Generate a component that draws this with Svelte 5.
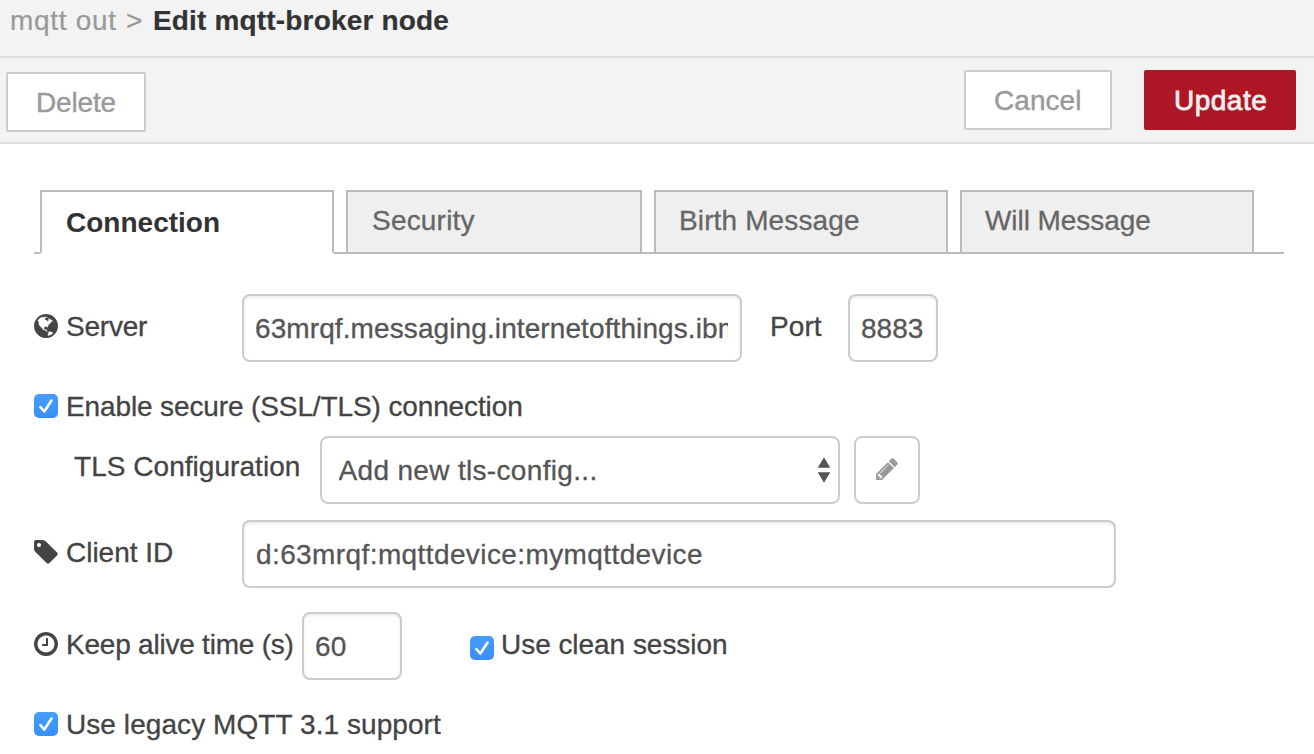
<script>
  const tabs = [
    { label: 'Connection', width: 294, gap: 12, spacing: 0.01 },
    { label: 'Security', width: 296, gap: 12, spacing: 0.2 },
    { label: 'Birth Message', width: 294, gap: 12, spacing: 0.13 },
    { label: 'Will Message', width: 294, gap: 0, spacing: -0.06 }
  ];
  let active = $state('Connection');
</script>

{#snippet check()}
  <svg class="check" viewBox="0 0 24 24" role="img" aria-label="checked">
    <defs>
      <linearGradient id="blue" x1="0" y1="0" x2="0" y2="1">
        <stop offset="0" stop-color="#489dfb" />
        <stop offset="1" stop-color="#3590fb" />
      </linearGradient>
    </defs>
    <rect width="24" height="24" rx="5" fill="url(#blue)" />
    <path d="M6.400 13.200l3.900 4.300L17.500 6.500" fill="none" stroke="#fff" stroke-width="2.600" stroke-linecap="round" stroke-linejoin="round" />
  </svg>
{/snippet}

<header class="title">
  <span class="crumb">mqtt out</span><span class="sep">&gt;</span><strong>Edit mqtt-broker node</strong>
</header>

<div class="toolbar">
  <button class="delete">Delete</button>
  <button class="cancel">Cancel</button>
  <button class="update">Update</button>
</div>

<main>
  <nav class="tabs">
    {#each tabs as tab}
      <button
        class="tab"
        class:active={active === tab.label}
        style="width: {tab.width}px; margin-right: {tab.gap}px; letter-spacing: {tab.spacing}px"
        onclick={() => (active = tab.label)}>{tab.label}</button>
    {/each}
  </nav>

  <div class="row server-row">
    <svg class="icon" viewBox="128 128 1536 1536"><path d="M896 128q209 0 385.500 103t279.500 279.500 103 385.500-103 385.500-279.500 279.500-385.500 103-385.500-103-279.500-279.500-103-385.500 103-385.500 279.500-279.500 385.500-103zm274 521q-2 1-9.500 9.500t-13.500 9.500q2 0 4.500-5t5-11 3.500-7q6-7 22-15 14-6 52-12 34-8 51 11-2-2 9.500-13t14.500-12q3-2 15-4.500t15-7.500l2-22q-12 1-17.500-7t-6.500-21q0 2-6 8 0-7-4.500-8t-11.500 1-9 1q-10-3-15-7.500t-8-16.500-4-15q-2-5-9.500-11t-9.500-10q-1-2-2.500-5.500t-3-6.500-4-5.500-5.500-2.500-7 5-7.500 10-4.500 5q-3-2-6-1.500t-4.500 1-4.500 3-5 3.500q-3 2-8.500 3t-8.500 2q15-5-1-11-10-4-16-3 9-4 7.500-12t-8.500-14h5q-1-4-8.500-8.500t-17.500-8.500-13-6q-8-5-34-9.500t-33-.5q-5 6-4.500 10.500t4 14 3.500 12.500q1 6-5.500 13t-6.500 12q0 7 14 15.500t10 21.500q-3 8-16 16t-16 12q-5 8-1.500 18.500t10.500 16.500q2 2 1.500 4t-3.500 4.500-5.500 4-6.500 3.500l-3 2q-11 5-20.500-6t-13.500-26q-7-25-16-30-23-8-29 1-5-13-41-26-25-9-58-4 6-1 0-15-7-15-19-12 3-6 4-17.500t1-13.500q3-13 12-23 1-1 7-8.500t9.500-13.500.5-6q35 4 50-11 5-5 11.500-17t10.500-17q9-6 14-5.500t14.500 5.500 14.500 5q14 1 15.500-11t-7.500-20q12 1 3-17-4-7-8-9-12-4-27 5-8 4 2 8-1-1-9.500 10.500t-16.500 17.500-16-5q-1-1-5.500-13.500t-9.500-13.500q-8 0-16 15 3-8-11-15t-24-8q19-12-8-27-7-4-20.500-5t-19.500 4q-5 7-5.500 11.500t5 8 10.500 5.500 11.500 4 8.500 3q14 10 8 14-2 1-8.500 3.500t-11.500 4.500-6 4q-3 4 0 14t-2 14q-5-5-9-17.500t-7-16.500q7 9-25 6l-10-1q-4 0-16 2t-20.500 1-13.500-8q-4-8 0-20 1-4 4-2-4-3-11-9.500t-10-8.500q-46 15-94 41 6 1 12-1 5-2 13-6.500t10-5.500q34-14 42-7l5-5q14 16 20 25-7-4-30-1-20 6-22 12 7 12 5 18-4-3-11.500-10t-14.500-11-15-5q-16 0-22 1-146 80-235 222 7 7 12 8 4 1 5 9t2.500 11 11.500-3q9 8 3 19 1-1 44 27 19 17 21 21 3 11-10 18-1-2-9-9t-9-4q-3 5 .5 18.500t10.500 12.500q-7 0-9.500 16t-2.500 35.500-1 23.500l2 1q-3 12 5.500 34.500t21.500 19.500q-13 3 20 43 6 8 8 9 3 2 12 7.500t15 10 10 10.500q4 5 10 22.500t14 23.500q-2 6 9.500 20t10.500 23q-1 0-2.500 1t-2.500 1q3 7 15.500 14t15.500 13q1 3 2 10t3 11 8 2q2-20-24-62-15-25-17-29-3-5-5.500-15.500t-4.500-14.500q2 0 6 1.500t8.500 3.500 7.500 4 2 3q-3 7 2 17.500t12 18.500 17 19 12 13q6 6 14 19.500t0 13.500q9 0 20 10t17 20q5 8 8 26t5 24q2 7 8.500 13.500t12.500 9.500l16 8 13 7q5 2 18.500 10.500t21.500 11.500q10 4 16 4t14.500-2.500 13.500-3.500q15-2 29 15t21 21q36 19 55 11-2 1 .5 7.500t8 15.500 9 14.500 5.500 8.500q5 6 18 15t18 15q6-4 7-9-3 8 7 20t18 10q14-3 14-32-31 15-49-18 0-1-2.500-5.500t-4-8.500-2.500-8.500 0-7.500 5-3q9 0 10-3.500t-2-12.500-4-13q-1-8-11-20t-12-15q-5 9-16 8t-16-9q0 1-1.500 5.500t-1.500 6.500q-13 0-15-1 1-3 2.500-17.500t3.500-22.500q1-4 5.500-12t7.500-14.500 4-12.500-4.500-9.500-17.500-2.500q-19 1-26 20-1 3-3 10.500t-5 11.500-9 7q-7 3-24 2t-24-5q-13-8-22.500-29t-9.500-37q0-10 2.500-26.500t3-25-5.500-24.500q3-2 9-9.500t10-10.500q2-1 4.500-1.500t4.500 0 4-1.500 3-6q-1-1-4-3-3-3-4-3 7 3 28.500-1.500t27.500 1.500q15 11 22-2 0-1-2.500-9.500t-.5-13.500q5 27 29 9 3 3 15.500 5t17.500 5q3 2 7 5.500t5.500 4.500 5-.5 8.500-6.500q10 14 12 24 11 40 19 44 7 3 11 2t4.500-9.500 0-14-1.500-12.500l-1-8v-18l-1-8q-15-3-18.500-12t1.500-18.500 15-18.500q1-1 8-3.500t15.500-6.500 12.500-8q21-19 15-35 7 0 11-9-1 0-5-3t-7.500-5-4.500-2q9-5 2-16 5-3 7.500-11t7.500-10q9 12 21 2 7-8 1-16 5-7 20.500-10.500t18.500-9.500q7 2 8-2t1-12 3-12q4-5 15-9t13-5l17-11q3-4 0-4 18 2 31-11 10-11-6-20 3-6-3-9.500t-15-5.500q3-1 11.500-.5t10.500-1.500q15-10-7-16-17-5-43 12zm-163 877q206-36 351-189-3-3-12.500-4.500t-12.500-3.500q-18-7-24-8 1-7-2.500-13t-8-9-12.500-8-11-7q-2-2-7-6t-7-5.500-7.500-4.500-8.500-2-10 1l-3 1q-3 1-5.500 2.500t-5.500 3-4 3 0 2.500q-21-17-36-22-5-1-11-5.500t-10.500-7-10-1.500-11.500 7q-5 5-6 15t-2 13q-7-5 0-17.500t2-18.500q-3-6-10.500-4.500t-12 4.500-11.500 8.500-9 6.500-8.500 5.500-8.500 7.500q-3 4-6 12t-5 11q-2-4-11.500-6.500t-9.500-5.500q2 10 4 35t5 38q7 31-12 48-27 25-29 40-4 22 12 26 0 7-8 20.500t-7 21.500q0 6 2 16z" /></svg>
    <span class="label server-label">Server</span>
    <div class="input server"><span>63mrqf.messaging.internetofthings.ibm</span></div>
    <span class="label port-label">Port</span>
    <div class="input port"><span>8883</span></div>
  </div>

  <div class="row secure-row">
    {@render check()}
    <span class="label secure-label">Enable secure (SSL/TLS) connection</span>
  </div>

  <div class="row tls-row">
    <span class="label tls-label">TLS Configuration</span>
    <div class="input select">
      <span>Add new tls-config...</span>
      <svg class="arrows" viewBox="0 0 14 26"><path d="M7 .3L13.300 10.700H.7zM.7 15.300h12.600L7 25.700z" /></svg>
    </div>
    <button class="edit" aria-label="Edit">
      <svg class="pencil" viewBox="128 128 1536 1536"><path d="M491 1536l91-91-235-235-91 91v107h128v128h107zm523-928q0-22-22-22-10 0-17 7l-542 542q-7 7-7 17 0 22 22 22 10 0 17-7l542-542q7-7 7-17zm-54-192l416 416-832 832h-416v-416zm683 96q0 53-37 90l-166 166-416-416 166-165q36-38 90-38 53 0 91 38l235 234q37 39 37 91z" /></svg>
    </button>
  </div>

  <div class="row client-row">
    <svg class="icon" viewBox="128 128 1536 1536"><path d="M576 448q0-53-37.500-90.500t-90.500-37.500-90.500 37.500-37.500 90.500 37.500 90.500 90.500 37.500 90.500-37.500 37.500-90.500zm1067 576q0 53-37 90l-491 492q-39 37-91 37-53 0-90-37l-715-716q-38-37-64.500-101t-26.500-117v-416q0-52 38-90t90-38h416q53 0 117 26.500t102 64.500l715 714q37 39 37 91z" /></svg>
    <span class="label client-label">Client ID</span>
    <div class="input client"><span>d:63mrqf:mqttdevice:mymqttdevice</span></div>
  </div>

  <div class="row keep-row">
    <svg class="icon" viewBox="128 128 1536 1536"><path d="M1024 544v448q0 14-9 23t-23 9h-320q-14 0-23-9t-9-23v-64q0-14 9-23t23-9h224v-352q0-14 9-23t23-9h64q14 0 23 9t9 23zm416 352q0-148-73-273t-198-198-273-73-273 73-198 198-73 273 73 273 198 198 273 73 273-73 198-198 73-273zm224 0q0 209-103 385.500t-279.500 279.500-385.500 103-385.500-103-279.500-279.500-103-385.500 103-385.500 279.500-279.500 385.500-103 385.500 103 279.500 279.500 103 385.500z" /></svg>
    <span class="label keep-label">Keep alive time (s)</span>
    <div class="input keep"><span>60</span></div>
    <div class="clean-check">{@render check()}</div>
    <span class="label clean-label">Use clean session</span>
  </div>

  <div class="row legacy-row">
    {@render check()}
    <span class="label legacy-label">Use legacy MQTT 3.1 support</span>
  </div>
</main>

<style>
  :global(body) {
    background: #fff;
  }
  :global(#app) {
    font: 28px/32px "Liberation Sans", Arial, sans-serif;
    color: #444;
  }
  * { box-sizing: border-box; }
  button {
    font: inherit;
    margin: 0;
    white-space: nowrap;
  }
  span, strong { white-space: nowrap; }

  .title {
    display: flex;
    height: 58px;
    padding: 5px 0 0 10px;
    background: #f3f3f3;
    border-bottom: 2px solid #ddd;
    color: #999;
    -webkit-text-stroke: 0.2px currentColor;
  }
  .crumb { width: 116px; letter-spacing: 0.7px; }
  .sep { width: 27px; }
  .title strong { color: #333; letter-spacing: 0.17px; }

  .toolbar {
    display: flex;
    align-items: flex-start;
    height: 86px;
    padding: 12px 18px 0 6px;
    background: #f3f3f3;
    border-bottom: 2px solid #ddd;
  }
  .toolbar button {
    height: 60px;
    border: 2px solid #ccc;
    border-radius: 2px;
    background: #fff;
    color: #999;
    padding: 2px 0 0 28px;
    text-align: left;
    -webkit-text-stroke: 0.4px currentColor;
  }
  .toolbar .delete { width: 140px; margin-top: 2px; letter-spacing: -0.15px; }
  .toolbar .cancel { width: 148px; margin-left: auto; letter-spacing: 0.05px; }
  .toolbar .update {
    width: 152px;
    margin-left: 32px;
    background: #ad1625;
    border-color: #ad1625;
    color: #eee;
    letter-spacing: 0.5px;
    -webkit-text-stroke-width: 0.8px;
  }

  main { height: 610px; padding: 46px 30px 0 34px; }
  .label, .input span, .tab:not(.active) { -webkit-text-stroke: 0.3px currentColor; }

  .tabs {
    display: flex;
    width: 1250px;
    height: 64px;
    padding-left: 6px;
    background: linear-gradient(#bbb, #bbb) 0 100% / 100% 2px no-repeat;
  }
  .tab {
    height: 64px;
    padding: 0 0 2px 24px;
    border: 2px solid #bbb;
    border-radius: 0;
    background: #efefef;
    color: #666;
    text-align: left;
  }
  .tab:nth-child(3), .tab:nth-child(4) { padding-left: 23px; }
  .tab.active {
    background: #fff;
    border-bottom-color: #fff;
    color: #333;
    font-weight: bold;
    padding: 2px 0 0 24px;
  }

  .row { display: flex; align-items: center; }
  .icon { width: 24px; height: 24px; margin-right: 8px; fill: #444; flex: none; }
  .check { display: block; width: 24px; height: 24px; flex: none; }
  .label { flex: none; padding-top: 2px; }

  .input, .edit {
    display: flex;
    align-items: center;
    flex: none;
    height: 68px;
    border: 2px solid #ccc;
    border-radius: 8px;
    background: #fff;
  }
  .input {
    padding: 0 12px 0 11px;
    color: #555;
    box-shadow: inset 0 2px 3px rgba(0, 0, 0, 0.075);
  }
  .input span { flex: 1; overflow: hidden; padding-top: 2px; }

  .server-row { height: 68px; margin-top: 40px; }
  .server-row .icon, .server-row .label { margin-bottom: 4px; }
  .server-label { width: 176px; letter-spacing: -0.23px; }
  .server { width: 500px; letter-spacing: 0.1px; }
  .port-label { width: 78px; margin-left: 28px; letter-spacing: 0.1px; }
  .port { width: 90px; padding-right: 4px; letter-spacing: 0.05px; }

  .secure-row { height: 24px; margin-top: 32px; }
  .secure-label { margin-left: 8px; letter-spacing: -0.12px; }

  .tls-row { height: 68px; margin-top: 18px; padding-left: 40px; }
  .tls-label { width: 246px; margin-bottom: 8px; letter-spacing: 0.04px; }
  .select { width: 520px; padding: 0 8px 0 16.500px; box-shadow: none; letter-spacing: 0.33px; }
  .arrows { width: 14px; height: 26px; margin-right: -1px; fill: #555; }
  .edit { width: 66px; margin-left: 14px; padding: 0; justify-content: center; }
  .pencil { width: 22px; height: 22px; fill: #999; margin-bottom: 2px; }

  .client-row { height: 68px; margin-top: 16px; }
  .client-row .icon, .client-row .label { margin-bottom: 4px; }
  .client-label { width: 176px; letter-spacing: -0.02px; }
  .client { width: 874px; padding-left: 12px; letter-spacing: 0.4px; }

  .keep-row { height: 68px; margin-top: 24px; }
  .keep-row .icon, .keep-row .label { margin-bottom: 4px; }
  .keep-label { width: 236px; letter-spacing: -0.22px; }
  .keep { width: 100px; letter-spacing: 0.3px; }
  .clean-check { margin: 4px 0 0 68px; }
  .clean-label { margin-left: 7px; letter-spacing: -0.04px; }

  .legacy-row { height: 24px; margin-top: 32px; }
  .legacy-label { margin-left: 8px; letter-spacing: 0.07px; }
</style>
